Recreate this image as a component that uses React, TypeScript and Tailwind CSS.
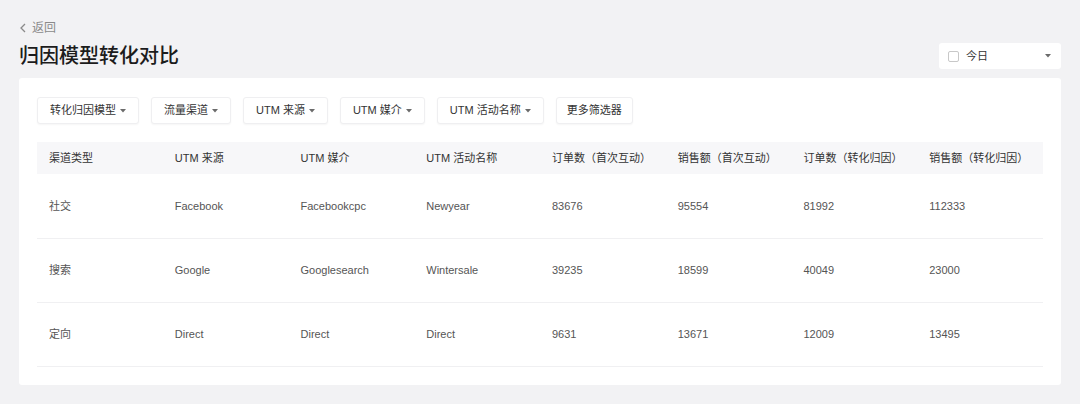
const filters = ['转化归因模型', '流量渠道', 'UTM 来源', 'UTM 媒介', 'UTM 活动名称']

const columns = [
	'渠道类型',
	'UTM 来源',
	'UTM 媒介',
	'UTM 活动名称',
	'订单数（首次互动）',
	'销售额（首次互动）',
	'订单数（转化归因）',
	'销售额（转化归因）',
]

const rows = [
	['社交', 'Facebook', 'Facebookcpc', 'Newyear', '83676', '95554', '81992', '112333'],
	['搜索', 'Google', 'Googlesearch', 'Wintersale', '39235', '18599', '40049', '23000'],
	['定向', 'Direct', 'Direct', 'Direct', '9631', '13671', '12009', '13495'],
]

function Caret() {
	return (
		<svg width="6" height="4" viewBox="0 0 6 4" className="shrink-0">
			<path d="M0 0h6L3 3.5z" fill="#6b6b6b" />
		</svg>
	)
}

export default function App() {
	return (
		<div
			className="min-h-[404px] w-[1080px] bg-[#f2f2f4] px-[19px] pt-[20px] pb-[20px] text-[#333]"
			style={{ fontFamily: '"Liberation Sans", "Noto Sans CJK SC", sans-serif' }}
		>
			{/* back link */}
			<div className="flex h-[16px] items-center gap-[5px] text-[12px] text-[#8a8a8a]">
				<svg width="8" height="10" viewBox="0 0 8 10">
					<path d="M6 1L2 5l4 4" fill="none" stroke="#8a8a8a" strokeWidth="1.3" />
				</svg>
				<span>返回</span>
			</div>

			{/* title + date picker */}
			<div className="mt-[7px] flex h-[26px] items-center justify-between">
				<h1 className="text-[20px] font-medium leading-none text-[#1c1c1c]">归因模型转化对比</h1>
				<div className="flex h-[26px] w-[122px] items-center rounded-[3px] bg-white pl-[9px] pr-[10px] text-[11px] text-[#333]">
					<span className="h-[11px] w-[11px] rounded-[2px] border border-[#c8c8c8]" />
					<span className="ml-[7px] flex-1">今日</span>
					<Caret />
				</div>
			</div>

			{/* card */}
			<div className="mt-[9px] rounded-[3px] bg-white px-[18px] pt-[19px] pb-[18px]">
				<div className="flex gap-[12px]">
					{filters.map((f) => (
						<div
							key={f}
							className="flex h-[27px] items-center gap-[4px] rounded-[3px] border border-[#efeff1] bg-white px-[12px] text-[11px] text-[#333] shadow-[0_1px_2px_rgba(0,0,0,0.04)]"
						>
							<span>{f}</span>
							<Caret />
						</div>
					))}
					<div className="flex h-[27px] items-center rounded-[3px] border border-[#efeff1] bg-white px-[10px] text-[11px] text-[#333] shadow-[0_1px_2px_rgba(0,0,0,0.04)]">
						更多筛选器
					</div>
				</div>

				<table className="mt-[18px] w-full table-fixed border-collapse text-[11px]">
					<thead>
						<tr className="h-[32px] bg-[#f7f7f9]">
							{columns.map((c) => (
								<th key={c} className="pl-[12px] text-left font-normal whitespace-nowrap text-[#333]">
									{c}
								</th>
							))}
						</tr>
					</thead>
					<tbody>
						{rows.map((r) => (
							<tr key={r[0]} className="h-[64px] border-b border-[#f0f0f2]">
								{r.map((v, i) => (
									<td key={i} className="pl-[12px] text-[#555]">
										{v}
									</td>
								))}
							</tr>
						))}
					</tbody>
				</table>
			</div>
		</div>
	)
}
